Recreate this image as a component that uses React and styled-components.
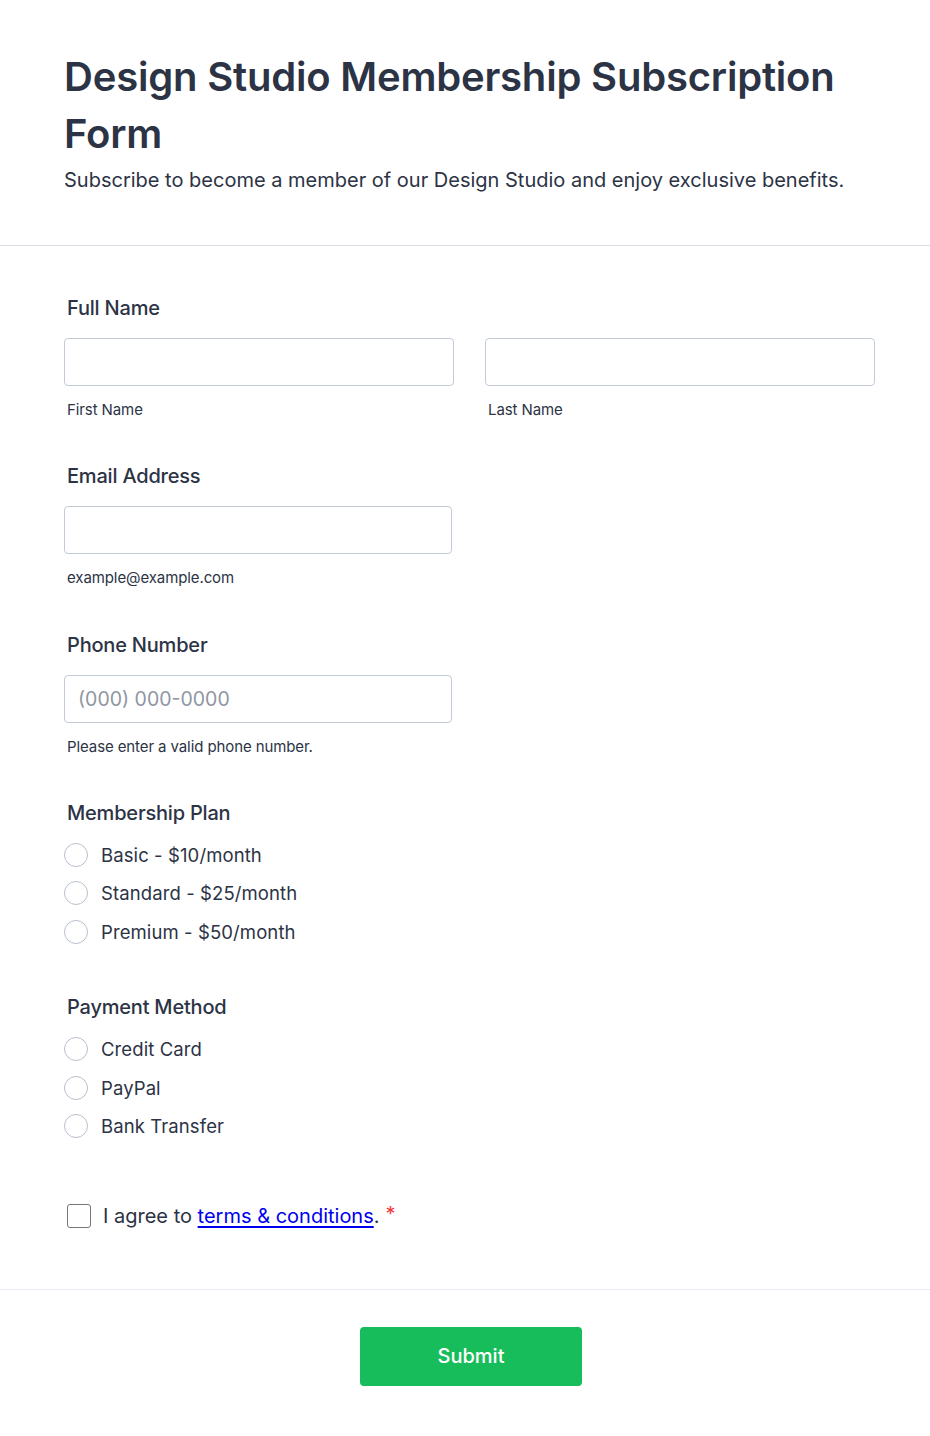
import React from "react";
import styled, { createGlobalStyle } from "styled-components";

const Global = createGlobalStyle`
  html, body { margin: 0; padding: 0; background: #fff; }
  body { font-family: Inter, "Noto Sans", sans-serif; color: #2c3345; }
  * { box-sizing: border-box; }
`;

const Page = styled.div`
  width: 930px;
  background: #fff;
`;

const Header = styled.header`
  padding: 48px 64px 51px;
  border-bottom: 1px solid #dadde6;
`;

const Title = styled.h1`
  margin: 0;
  font-size: 40px;
  line-height: 57px;
  font-weight: 600;
  letter-spacing: -0.2px;
  color: #2c3345;
`;

const Subtitle = styled.p`
  margin: 4px 0 0;
  font-size: 20px;
  line-height: 28px;
  font-weight: 400;
  color: #2c3345;
`;

const Form = styled.form`
  padding: 48px 55px 0 64px;
  display: flex;
  flex-direction: column;
  gap: 42.33px;
`;

const Field = styled.div`
  display: flex;
  flex-direction: column;
`;

const Label = styled.div`
  font-size: 20px;
  line-height: 28px;
  font-weight: 500;
  letter-spacing: -0.2px;
  color: #2c3345;
  padding-left: 3px;
  margin-bottom: ${(p) => p.$gap ?? 16}px;
`;

const Row = styled.div`
  display: grid;
  grid-template-columns: 390px 390px;
  column-gap: 31px;
`;

const Col = styled.div`
  display: flex;
  flex-direction: column;
`;

const Input = styled.input`
  width: ${(p) => p.$w ?? 390}px;
  height: 48px;
  border: 1px solid #c3cad8;
  border-radius: 4px;
  padding: 0 13px;
  font-family: Inter, "Noto Sans", sans-serif;
  font-size: 19.5px;
  color: #2c3345;
  outline: none;
  &::placeholder { color: #8f96a3; }
`;

const Sub = styled.div`
  margin-top: 14px;
  padding-left: 3px;
  font-size: 15px;
  line-height: 20px;
  letter-spacing: -0.1px;
  color: #2c3345;
`;

const Options = styled.div`
  display: flex;
  flex-direction: column;
`;

const Option = styled.label`
  display: flex;
  align-items: center;
  gap: 13px;
  height: 38.33px;
  font-size: 18.5px;
  line-height: 28px;
  color: #2c3345;
  letter-spacing: 0.1px;
`;

const Radio = styled.span`
  width: 24px;
  height: 24px;
  border-radius: 50%;
  border: 1px solid #b8bfcc;
  flex: none;
`;

const Agree = styled.div`
  display: flex;
  align-items: center;
  padding-left: 3px;
  margin-top: 14px;
  font-size: 20px;
  line-height: 28px;
  color: #2c3345;
`;

const Box = styled.span`
  width: 24px;
  height: 24px;
  border: 1px solid #767676;
  border-radius: 3px;
  margin-right: 12px;
  flex: none;
`;

const Link = styled.a`
  color: #0000ee;
  text-decoration: underline;
  text-underline-offset: 3px;
`;

const Star = styled.span`
  color: #f23a3c;
  margin-left: 6px;
  position: relative;
  top: -2px;
`;

const Footer = styled.div`
  margin-top: 59px;
  border-top: 1px solid #eaebf2;
  padding: 37px 0 50px;
  display: flex;
  justify-content: center;
`;

const Button = styled.button`
  width: 222px;
  height: 59px;
  margin-left: 12px;
  border: none;
  border-radius: 4px;
  background: #18bd5b;
  color: #fff;
  font-family: Inter, "Noto Sans", sans-serif;
  font-size: 20px;
  font-weight: 500;
`;

const plans = ["Basic - $10/month", "Standard - $25/month", "Premium - $50/month"];
const methods = ["Credit Card", "PayPal", "Bank Transfer"];

export default function App() {
  return (
    <Page>
      <Global />
      <Header>
        <Title>Design Studio Membership Subscription Form</Title>
        <Subtitle>Subscribe to become a member of our Design Studio and enjoy exclusive benefits.</Subtitle>
      </Header>
      <Form onSubmit={(e) => e.preventDefault()}>
        <Field>
          <Label>Full Name</Label>
          <Row>
            <Col>
              <Input />
              <Sub>First Name</Sub>
            </Col>
            <Col>
              <Input />
              <Sub>Last Name</Sub>
            </Col>
          </Row>
        </Field>
        <Field>
          <Label>Email Address</Label>
          <Input $w={388} />
          <Sub>example@example.com</Sub>
        </Field>
        <Field>
          <Label>Phone Number</Label>
          <Input $w={388} placeholder="(000) 000-0000" />
          <Sub>Please enter a valid phone number.</Sub>
        </Field>
        <Field>
          <Label $gap={9}>Membership Plan</Label>
          <Options>
            {plans.map((p) => (
              <Option key={p}>
                <Radio />
                {p}
              </Option>
            ))}
          </Options>
        </Field>
        <Field>
          <Label $gap={9}>Payment Method</Label>
          <Options>
            {methods.map((p) => (
              <Option key={p}>
                <Radio />
                {p}
              </Option>
            ))}
          </Options>
        </Field>
        <Agree>
          <Box />
          <span>
            I agree to <Link href="#">terms &amp; conditions</Link>.
          </span>
          <Star>*</Star>
        </Agree>
      </Form>
      <Footer>
        <Button type="button">Submit</Button>
      </Footer>
    </Page>
  );
}
